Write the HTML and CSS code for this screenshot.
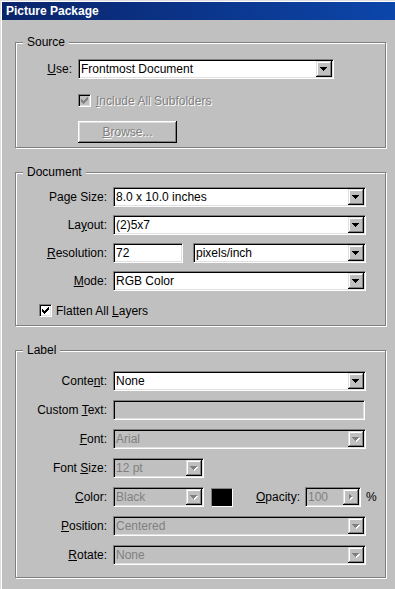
FILE: index.html
```html
<!DOCTYPE html>
<html lang="en">
  <head>
    <meta charset="UTF-8" />
    <title>Picture Package</title>
    <link rel="stylesheet" href="styles.css">
  </head>
  <body>
    <div class="window">
      <div class="titlebar">Picture Package</div>

      <!-- Source -->
      <div class="group group--source">
        <span class="legend">Source</span>
        <div class="row">
          <span class="label"><u>U</u>se:</span>
          <div class="field select">
            <span class="value">Frontmost Document</span>
            <span class="drop"><svg width="7" height="4"><path d="M0 0h7v1h-1v1h-1v1h-1v1h-1v-1h-1v-1h-1v-1h-1z" /></svg></span>
          </div>
        </div>
        <div class="check-row check-row--source disabled">
          <span class="check"><svg width="7" height="7"><path d="M6 0h1v3h-1v1h-1v1h-1v1h-1v1h-1v-1h-1v-1h-1v-3h1v1h1v1h1v-1h1v-1h1z" /></svg></span>
          <span class="check-text"><u>I</u>nclude All Subfolders</span>
        </div>
        <button class="button" disabled><u>B</u>rowse...</button>
      </div>

      <!-- Document -->
      <div class="group group--document">
        <span class="legend">Document</span>
        <div class="row">
          <span class="label">Pa<u>g</u>e Size:</span>
          <div class="field select">
            <span class="value">8.0 x 10.0 inches</span>
            <span class="drop"><svg width="7" height="4"><path d="M0 0h7v1h-1v1h-1v1h-1v1h-1v-1h-1v-1h-1v-1h-1z" /></svg></span>
          </div>
        </div>
        <div class="row row--close">
          <span class="label">La<u>y</u>out:</span>
          <div class="field select">
            <span class="value">(2)5x7</span>
            <span class="drop"><svg width="7" height="4"><path d="M0 0h7v1h-1v1h-1v1h-1v1h-1v-1h-1v-1h-1v-1h-1z" /></svg></span>
          </div>
        </div>
        <div class="row row--wide">
          <span class="label"><u>R</u>esolution:</span>
          <div class="field input input--res"><span class="value">72</span></div>
          <div class="field select select--units">
            <span class="value">pixels/inch</span>
            <span class="drop"><svg width="7" height="4"><path d="M0 0h7v1h-1v1h-1v1h-1v1h-1v-1h-1v-1h-1v-1h-1z" /></svg></span>
          </div>
        </div>
        <div class="row">
          <span class="label"><u>M</u>ode:</span>
          <div class="field select">
            <span class="value">RGB Color</span>
            <span class="drop"><svg width="7" height="4"><path d="M0 0h7v1h-1v1h-1v1h-1v1h-1v-1h-1v-1h-1v-1h-1z" /></svg></span>
          </div>
        </div>
        <div class="check-row check-row--flatten">
          <span class="check"><svg width="7" height="7"><path d="M6 0h1v3h-1v1h-1v1h-1v1h-1v1h-1v-1h-1v-1h-1v-3h1v1h1v1h1v-1h1v-1h1z" /></svg></span>
          <span class="check-text">Flatten All <u>L</u>ayers</span>
        </div>
      </div>

      <!-- Label -->
      <div class="group group--label">
        <span class="legend">Label</span>
        <div class="row">
          <span class="label">Conte<u>n</u>t:</span>
          <div class="field select">
            <span class="value">None</span>
            <span class="drop"><svg width="7" height="4"><path d="M0 0h7v1h-1v1h-1v1h-1v1h-1v-1h-1v-1h-1v-1h-1z" /></svg></span>
          </div>
        </div>
        <div class="row">
          <span class="label">Custom <u>T</u>ext:</span>
          <div class="field input input--full disabled"></div>
        </div>
        <div class="row">
          <span class="label"><u>F</u>ont:</span>
          <div class="field select disabled">
            <span class="value">Arial</span>
            <span class="drop"><svg width="8" height="5"><path class="shade" d="M1 1h7v1h-1v1h-1v1h-1v1h-1v-1h-1v-1h-1v-1h-1z" /><path d="M0 0h7v1h-1v1h-1v1h-1v1h-1v-1h-1v-1h-1v-1h-1z" /></svg></span>
          </div>
        </div>
        <div class="row">
          <span class="label">Font <u>S</u>ize:</span>
          <div class="field select select--narrow disabled">
            <span class="value">12 pt</span>
            <span class="drop"><svg width="8" height="5"><path class="shade" d="M1 1h7v1h-1v1h-1v1h-1v1h-1v-1h-1v-1h-1v-1h-1z" /><path d="M0 0h7v1h-1v1h-1v1h-1v1h-1v-1h-1v-1h-1v-1h-1z" /></svg></span>
          </div>
        </div>
        <div class="row row--color">
          <span class="label"><u>C</u>olor:</span>
          <div class="field select select--narrow disabled">
            <span class="value">Black</span>
            <span class="drop"><svg width="8" height="5"><path class="shade" d="M1 1h7v1h-1v1h-1v1h-1v1h-1v-1h-1v-1h-1v-1h-1z" /><path d="M0 0h7v1h-1v1h-1v1h-1v1h-1v-1h-1v-1h-1v-1h-1z" /></svg></span>
          </div>
          <span class="swatch"></span>
          <span class="label label--inline"><u>O</u>pacity:</span>
          <div class="field input input--opacity disabled">
            <span class="value">100</span>
            <span class="drop"><svg width="4" height="6"><path class="shade" d="M1 1v5h1v-1h1v-1h1v-1h-1v-1h-1v-1z" /><path d="M0 0v5h1v-1h1v-1h1v-1h-1v-1h-1v-1z" /></svg></span>
          </div>
          <span class="pct">%</span>
        </div>
        <div class="row">
          <span class="label"><u>P</u>osition:</span>
          <div class="field select disabled">
            <span class="value">Centered</span>
            <span class="drop"><svg width="8" height="5"><path class="shade" d="M1 1h7v1h-1v1h-1v1h-1v1h-1v-1h-1v-1h-1v-1h-1z" /><path d="M0 0h7v1h-1v1h-1v1h-1v1h-1v-1h-1v-1h-1v-1h-1z" /></svg></span>
          </div>
        </div>
        <div class="row">
          <span class="label"><u>R</u>otate:</span>
          <div class="field select disabled">
            <span class="value">None</span>
            <span class="drop"><svg width="8" height="5"><path class="shade" d="M1 1h7v1h-1v1h-1v1h-1v1h-1v-1h-1v-1h-1v-1h-1z" /><path d="M0 0h7v1h-1v1h-1v1h-1v1h-1v-1h-1v-1h-1v-1h-1z" /></svg></span>
          </div>
        </div>
      </div>
    </div>
  </body>
</html>
```

FILE: styles.css
```css
* {
  box-sizing: border-box;
}
body {
  margin: 0;
  background: #c0c0c0;
  font-family: "Liberation Sans", Arial, sans-serif;
  font-size: 12px;
  color: #000;
}
u {
  text-underline-offset: 1px;
}
svg {
  display: block;
  shape-rendering: crispEdges;
}

.window {
  width: 395px;
  height: 589px;
  overflow: hidden;
  border-top: 1px solid #dfdfdf;
  border-left: 1px solid #dfdfdf;
  padding: 1px 0 0 1px;
  box-shadow: inset 1px 1px #fff;
}
.titlebar {
  height: 18px;
  line-height: 18px;
  padding-left: 4px;
  background: linear-gradient(90deg, #0a246a, #0c46aa);
  color: #fff;
  font-weight: bold;
}

/* etched group boxes */
.group {
  position: relative;
  width: 371px;
  margin-left: 13px;
  border: 1px solid #808080;
  box-shadow: inset 1px 1px #fff, 1px 1px #fff;
}
.group--source {
  margin-top: 22px;
  height: 106px;
  padding-top: 16px;
}
.group--document {
  margin-top: 24px;
  height: 154px;
  padding-top: 14px;
}
.group--label {
  margin-top: 24px;
  height: 228px;
  padding-top: 20px;
}
.legend {
  position: absolute;
  top: -8px;
  left: 7px;
  padding: 0 4px;
  line-height: 14px;
  background: #c0c0c0;
}

/* rows */
.row {
  display: flex;
  align-items: center;
  height: 20px;
  width: 350px;
}
.group--source .row {
  width: 318px;
}
.label {
  flex: none;
  width: 91px;
  margin-right: 6px;
  text-align: right;
  white-space: nowrap;
}
.group--source .label {
  width: 56px;
}
.group--document .row + .row {
  margin-top: 8px;
}
.group--document .row--close {
  margin-top: 6px;
}
.group--document .row--wide {
  margin-top: 9px;
}
.group--label .row + .row {
  margin-top: 9px;
}
.group--label .row--color {
  margin-top: 12px;
}

/* sunken fields */
.field {
  display: flex;
  align-items: center;
  height: 20px;
  border: 1px solid;
  border-color: #808080 #fff #fff #808080;
  box-shadow: inset 1px 1px #000, inset -1px -1px #dfdfdf;
  background: #fff;
}
.field .value {
  flex: 1;
  padding-left: 2px;
  white-space: nowrap;
  overflow: hidden;
}
.field.disabled {
  background: #c0c0c0;
  color: #808080;
}
.select {
  flex: 1;
}
.select--narrow {
  flex: none;
  width: 91px;
}
.select--units {
  margin-left: 10px;
}
.input--res {
  width: 70px;
}
.input--full {
  flex: 1;
  margin-right: 1px;
}
.input--opacity {
  width: 56px;
  margin-right: 1px;
}
.drop {
  flex: none;
  display: flex;
  align-items: center;
  justify-content: center;
  width: 16px;
  height: 16px;
  margin: 1px;
  background: #c0c0c0;
  box-shadow: inset -1px -1px #000, inset 1px 1px #dfdfdf,
    inset -2px -2px #808080, inset 2px 2px #fff;
}
.drop svg {
  margin-left: -1px;
}
.disabled .drop path {
  fill: #808080;
}
.disabled .drop path.shade {
  fill: #fff;
}

.swatch {
  flex: none;
  width: 22px;
  height: 19px;
  margin-left: 7px;
  border: 1px solid;
  border-color: #808080 #fff #fff #808080;
  background: #000;
}
.label--inline {
  width: auto;
  margin-left: auto;
  margin-right: 5px;
}
.pct {
  width: 0;
  margin-left: 4px;
  white-space: nowrap;
}

/* checkboxes */
.check-row {
  display: flex;
  align-items: center;
  height: 13px;
  gap: 5px;
}
.check-row--source {
  margin-top: 15px;
  padding-left: 62px;
}
.check-row--flatten {
  margin-top: 13px;
  padding-left: 23px;
  gap: 4px;
}
.check {
  flex: none;
  display: flex;
  align-items: center;
  justify-content: center;
  width: 13px;
  height: 13px;
  border: 1px solid;
  border-color: #808080 #fff #fff #808080;
  box-shadow: inset 1px 1px #000, inset -1px -1px #dfdfdf;
  background: #fff;
}
.check-row.disabled .check {
  background: #c0c0c0;
}
.check-row.disabled .check path {
  fill: #808080;
}
.check-row.disabled .check-text {
  color: #808080;
  text-shadow: 1px 1px #fff;
}

/* push button */
.button {
  display: block;
  width: 99px;
  height: 22px;
  margin: 14px 0 0 62px;
  padding: 0;
  border: none;
  background: #c0c0c0;
  box-shadow: inset -1px -1px #000, inset 1px 1px #fff,
    inset -2px -2px #808080, inset 2px 2px #dfdfdf;
  font: inherit;
  color: #808080;
  text-shadow: 1px 1px #fff;
}
```
